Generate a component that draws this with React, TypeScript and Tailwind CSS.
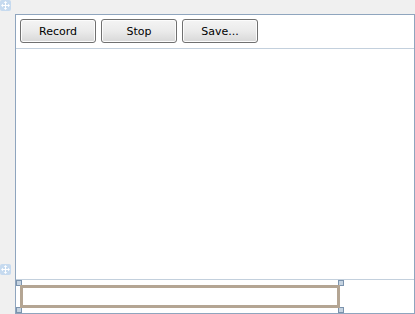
import React from "react";

function MoveIcon({ className }: { className: string }) {
  return (
    <svg className={className} width="11" height="11" viewBox="0 0 11 11">
      <rect x="0" y="0" width="11" height="11" rx="2" fill="#c6daef" />
      <path d="M5.5 2 V9 M2 5.5 H9" stroke="#ffffff" strokeWidth="1" />
      <path d="M5.5 1 L7.3 3 H3.7 Z M5.5 10 L7.3 8 H3.7 Z M1 5.5 L3 3.7 V7.3 Z M10 5.5 L8 3.7 V7.3 Z" fill="#ffffff" />
    </svg>
  );
}

function Btn({ label }: { label: string }) {
  return (
    <button className="w-[76px] h-[24px] rounded-[3px] border border-[#707070] bg-gradient-to-b from-[#f4f4f4] via-[#ebebeb] to-[#d8d8d8] text-[11px] text-black shadow-[inset_0_0_0_1px_#fcfcfc] font-['DejaVu_Sans',sans-serif] leading-none pt-[1px]">
      {label}
    </button>
  );
}

function Handle({ className }: { className: string }) {
  return <div className={`absolute w-[6px] h-[6px] bg-[#c5d3e1] border border-[#7b93ad] ${className}`} />;
}

export default function App() {
  return (
    <div className="relative w-[415px] h-[314px] bg-[#f0f0f0] overflow-hidden">
      <MoveIcon className="absolute left-0 top-0" />
      <MoveIcon className="absolute left-0 top-[264px]" />
      <div className="ml-[15px] pt-[14px]">
        <div className="w-[400px] h-[300px] border border-[#8fa5be] bg-white flex flex-col">
          <div className="h-[34px] border-b border-[#c3d0dd] pl-[4px] pt-[4px] flex gap-[5px]">
            <Btn label="Record" />
            <Btn label="Stop" />
            <Btn label="Save..." />
          </div>
          <div className="flex-1 border-b border-[#c3d0dd]" />
          <div className="h-[33px] relative">
            <Handle className="left-0 top-0" />
            <Handle className="left-0 bottom-0" />
            <Handle className="left-[322px] top-0" />
            <Handle className="left-[322px] bottom-0" />
            <div className="absolute left-[4px] top-[5px] w-[320px] h-[23px] border-[3px] border-[#b4a593] bg-white" />
          </div>
        </div>
      </div>
    </div>
  );
}
